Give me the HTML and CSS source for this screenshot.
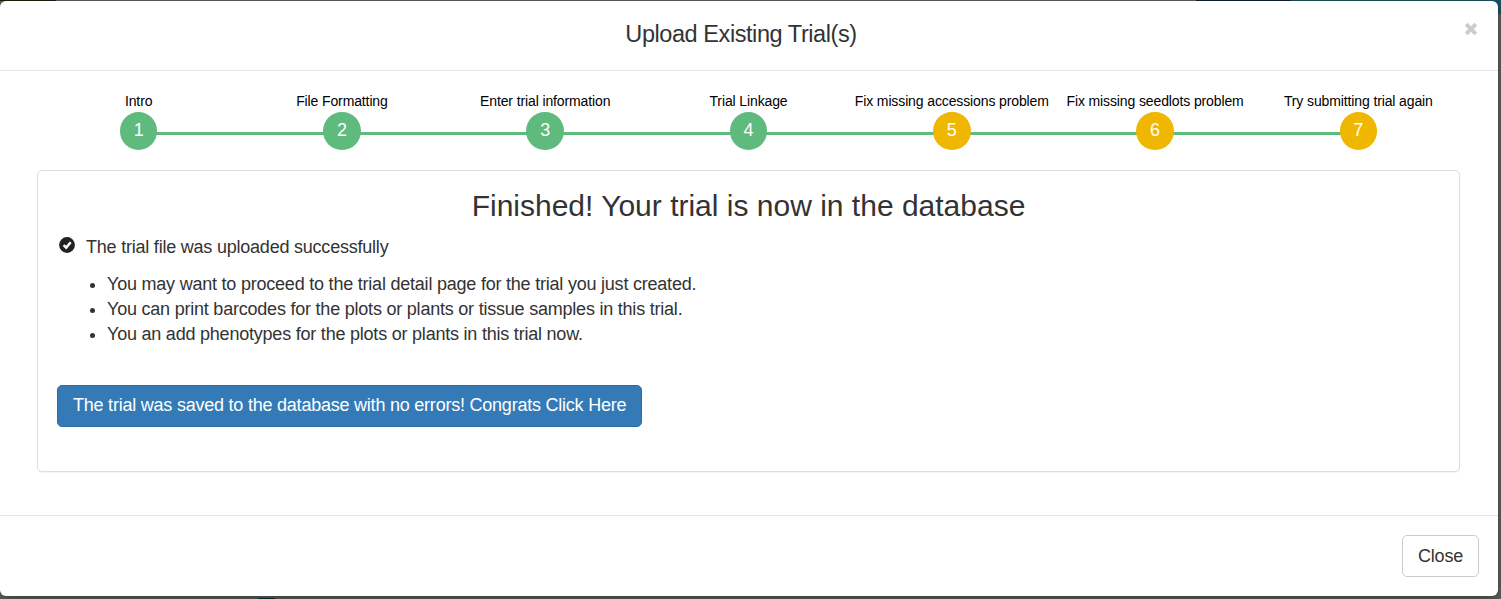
FILE: index.html
```html
<!DOCTYPE html>
<html lang="en">
<head>
<meta charset="utf-8">
<title>Upload Existing Trial(s)</title>
<link rel="stylesheet" href="styles.css">
</head>
<body>
<div class="modal">
  <header class="modal-header">
    <h4 class="modal-title">Upload Existing Trial(s)</h4>
    <button class="dismiss" aria-label="Close"><svg width="14" height="14" viewBox="0 0 14 14"><path d="M2.2 2.2 11.8 11.8M11.8 2.2 2.2 11.8" stroke="#ccc" stroke-width="4"/></svg></button>
  </header>
  <main class="modal-body">
    <ol class="steps">
      <li class="step done"><span class="label">Intro</span><span class="dot">1</span></li>
      <li class="step done"><span class="label">File Formatting</span><span class="dot">2</span></li>
      <li class="step done"><span class="label">Enter trial information</span><span class="dot">3</span></li>
      <li class="step done"><span class="label">Trial Linkage</span><span class="dot">4</span></li>
      <li class="step pending"><span class="label">Fix missing accessions problem</span><span class="dot">5</span></li>
      <li class="step pending"><span class="label">Fix missing seedlots problem</span><span class="dot">6</span></li>
      <li class="step pending"><span class="label">Try submitting trial again</span><span class="dot">7</span></li>
    </ol>
    <section class="panel">
      <h2 class="panel-title">Finished! Your trial is now in the database</h2>
      <p class="status">
        <svg class="check" width="16" height="16" viewBox="0 0 16 16"><circle cx="8" cy="8" r="7.9" fill="#222"/><path d="M4.6 8.2 7.2 10.6 11.7 5.3" fill="none" stroke="#fff" stroke-width="2.5"/></svg>
        <span>The trial file was uploaded successfully</span>
      </p>
      <ul class="notes">
        <li>You may want to proceed to the trial detail page for the trial you just created.</li>
        <li>You can print barcodes for the plots or plants or tissue samples in this trial.</li>
        <li>You an add phenotypes for the plots or plants in this trial now.</li>
      </ul>
      <button class="btn btn-primary">The trial was saved to the database with no errors! Congrats Click Here</button>
    </section>
  </main>
  <footer class="modal-footer"><button class="btn btn-default">Close</button></footer>
</div>
</body>
</html>
```
FILE: styles.css
```css
* { box-sizing: border-box; }
body {
  margin: 0;
  height: 599px;
  padding-top: 1px;
  overflow: hidden;
  background:
    linear-gradient(#0f2a33, #0f2a33) 258px 598px / 17px 1px no-repeat,
    linear-gradient(#14203a, #14203a) 1196px 0 / 95px 1px no-repeat,
    linear-gradient(#1f5261, #1f5261) 1291px 0 / 210px 14px no-repeat,
    linear-gradient(#17240f, #17240f) 0 0 / 56px 1px no-repeat,
    #606060;
  font-family: "Liberation Sans", Arial, sans-serif;
  font-size: 18px;
  letter-spacing: -.218px;
  line-height: 25px;
  color: #333;
}
.modal {
  display: flex;
  flex-direction: column;
  width: 1498px;
  height: 595px;
  background: #fff;
  border-radius: 6px;
  box-shadow: 0 3px 12px rgba(0, 0, 0, .4);
}
.modal-header {
  display: flex;
  height: 70px;
  padding: 17px 20px 0;
  border-bottom: 1px solid #e5e5e5;
}
.modal-title {
  flex: 1;
  margin: 0 1px 0 -1px;
  font-size: 23.5px;
  font-weight: 400;
  letter-spacing: -.43px;
  line-height: 32px;
  text-align: center;
}
.dismiss {
  display: flex;
  width: 14px;
  height: 14px;
  margin-top: 4px;
  padding: 0;
  border: 0;
  background: none;
}
.modal-body { flex: 1; padding: 20px 38px 0 37px; }
.steps {
  display: grid;
  grid-template-columns: repeat(7, 1fr);
  margin: 0;
  padding: 0;
  list-style: none;
}
.step {
  position: relative;
  display: flex;
  flex-direction: column;
  align-items: center;
}
.step + .step::before {
  content: "";
  position: absolute;
  top: 41px;
  right: 50%;
  width: 100%;
  height: 3px;
  background: #5fba7d;
}
.label {
  height: 21px;
  color: #000;
  font-size: 14px;
  letter-spacing: -.12px;
  line-height: 20px;
  white-space: nowrap;
}
.dot {
  z-index: 1;
  width: 37.5px;
  height: 38px;
  border-radius: 50%;
  color: #fff;
  letter-spacing: 0;
  line-height: 36px;
  text-align: center;
}
.done .dot { background: #5fba7d; }
.pending .dot { background: #efb700; }
.panel {
  height: 302px;
  margin-top: 20px;
  padding: 17px 19px;
  border: 1px solid #ddd;
  border-radius: 5px;
  box-shadow: 0 1px 1px rgba(0, 0, 0, .05);
}
.panel-title {
  margin: 0;
  font-size: 30px;
  font-weight: 400;
  letter-spacing: 0;
  line-height: 36px;
  text-align: center;
}
.status {
  display: flex;
  gap: 11px;
  margin: 11px 0 12px 2px;
}
.check { margin-top: 2px; }
.notes { margin: 0; padding-left: 50px; }
.btn {
  height: 42px;
  padding: 0 15px;
  border: 1px solid #ccc;
  border-radius: 5px;
  background: #fff;
  color: #333;
  font: inherit;
  letter-spacing: inherit;
  line-height: 38px;
}
.btn-primary {
  width: 585px;
  margin-top: 38px;
  padding-bottom: 2px;
  border-color: #2e6da4;
  background: #337ab7;
  color: #fff;
  letter-spacing: -.225px;
  white-space: nowrap;
}
.modal-footer {
  display: flex;
  justify-content: flex-end;
  height: 81px;
  padding: 19px 19px 0;
  border-top: 1px solid #e5e5e5;
}
```
